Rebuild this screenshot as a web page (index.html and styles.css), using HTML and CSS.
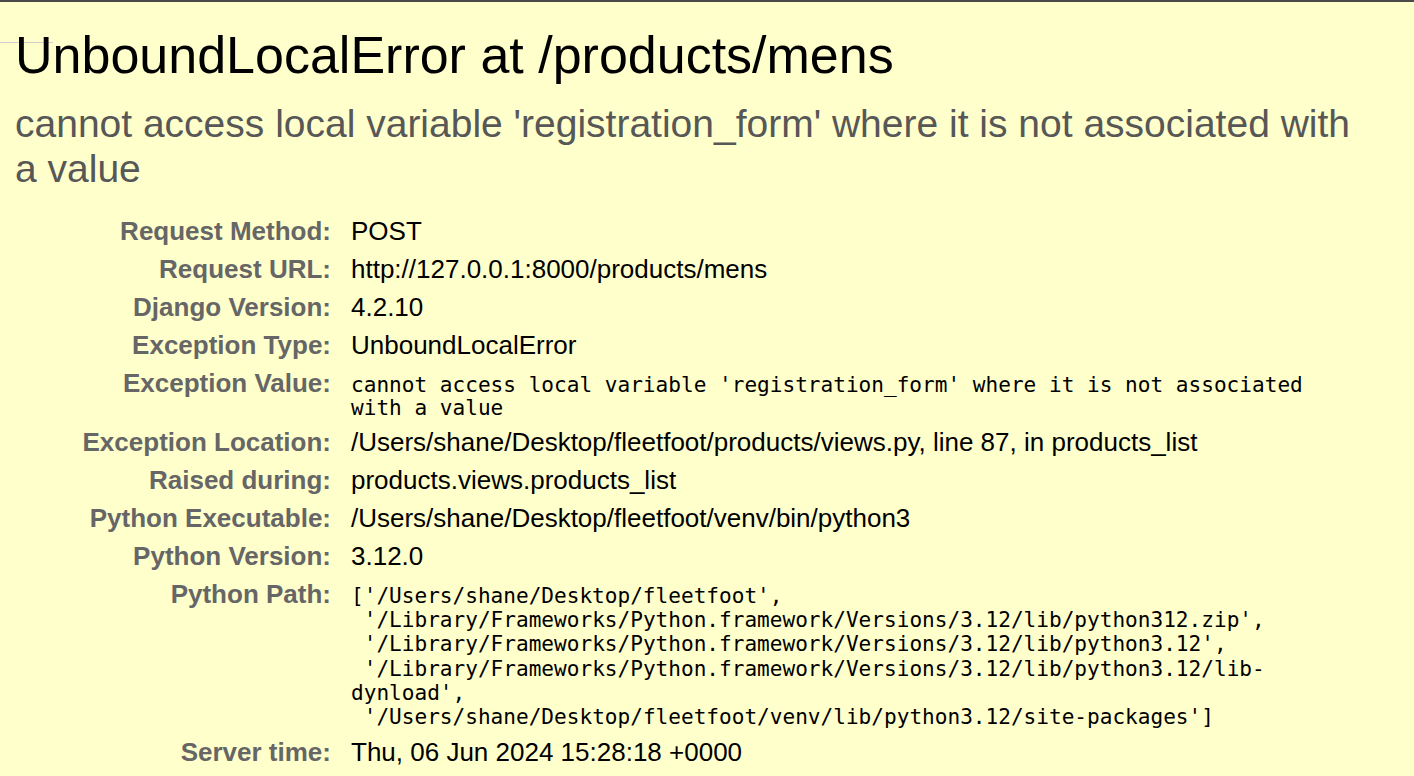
FILE: index.html
```html
<!DOCTYPE html>
<html lang="en">
<head>
<meta charset="utf-8">
<title>UnboundLocalError at /products/mens</title>
<link rel="stylesheet" href="styles.css">
</head>
<body>
<div class="summary">
  <h1 class="title">UnboundLocalError at /products/mens</h1>
  <h2 class="subtitle">cannot access local variable 'registration_form' where it is not associated with a value</h2>
  <table class="meta">
    <tbody>
      <tr><th>Request Method:</th><td>POST</td></tr>
      <tr><th>Request URL:</th><td>http://127.0.0.1:8000/products/mens</td></tr>
      <tr><th>Django Version:</th><td>4.2.10</td></tr>
      <tr><th>Exception Type:</th><td>UnboundLocalError</td></tr>
      <tr><th>Exception Value:</th><td><pre class="mono exc-value">cannot access local variable 'registration_form' where it is not associated with a value</pre></td></tr>
      <tr><th>Exception Location:</th><td><span class="fname">/Users/shane/Desktop/fleetfoot/products/views.py</span>, line 87, in products_list</td></tr>
      <tr><th>Raised during:</th><td>products.views.products_list</td></tr>
      <tr><th>Python Executable:</th><td>/Users/shane/Desktop/fleetfoot/venv/bin/python3</td></tr>
      <tr><th>Python Version:</th><td>3.12.0</td></tr>
      <tr><th>Python Path:</th><td><pre class="mono">['/Users/shane/Desktop/fleetfoot',
 '/Library/Frameworks/Python.framework/Versions/3.12/lib/python312.zip',
 '/Library/Frameworks/Python.framework/Versions/3.12/lib/python3.12',
 '/Library/Frameworks/Python.framework/Versions/3.12/lib/python3.12/lib-dynload',
 '/Users/shane/Desktop/fleetfoot/venv/lib/python3.12/site-packages']</pre></td></tr>
      <tr><th>Server time:</th><td>Thu, 06 Jun 2024 15:28:18 +0000</td></tr>
    </tbody>
  </table>
</div>
</body>
</html>
```

FILE: styles.css
```css
html, body {
  margin: 0;
  padding: 0;
}

body {
  background: #ffc;
  color: #000;
  font-family: "Liberation Sans", Arial, Helvetica, sans-serif;
  min-height: 776px;
  border-top: 2px solid #4a4a4a;
  box-sizing: border-box;
  position: relative;
}

body::before {
  content: "";
  position: absolute;
  left: 0;
  top: 40px;
  width: 53px;
  height: 1px;
  background: #d0d0d0;
}

.summary {
  padding: 0 50px 0 15px;
  position: relative;
}

.title {
  margin: 23px 0 0 0;
  font-size: 52px;
  line-height: 60px;
  font-weight: normal;
  color: #000;
}

.subtitle {
  margin: 16px 0 0 0;
  font-size: 39px;
  line-height: 45px;
  font-weight: normal;
  color: #575757;
}

.meta {
  margin-top: 21px;
  border-collapse: collapse;
  border: none;
  background: transparent;
}

.meta th {
  width: 316px;
  padding: 4px 20px 4px 0;
  text-align: right;
  vertical-align: baseline;
  font-weight: bold;
  font-size: 26px;
  line-height: 30px;
  color: #666;
  white-space: nowrap;
}

.meta td {
  max-width: 985px;
  padding: 4px 0;
  vertical-align: baseline;
  font-size: 26px;
  line-height: 30px;
  color: #000;
}

.mono {
  margin: 0;
  font-family: "DejaVu Sans Mono", Menlo, monospace;
  font-size: 21.08px;
  line-height: 24.2px;
  white-space: pre-wrap;
  color: #000;
}

.exc-value {
  line-height: 23px;
}
```
